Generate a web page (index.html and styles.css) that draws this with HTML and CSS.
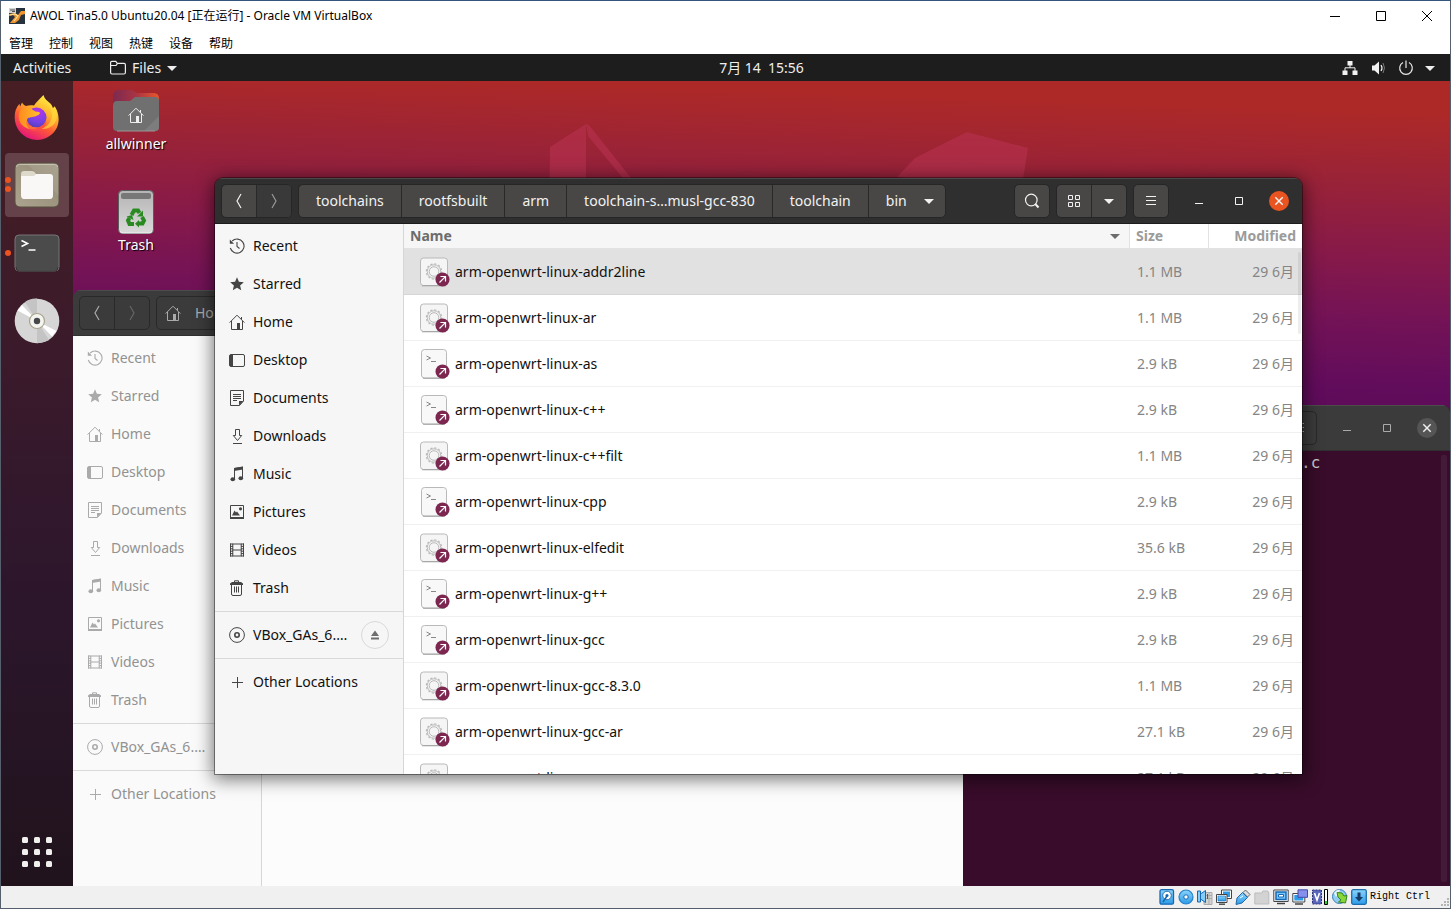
FILE: index.html
```html
<!DOCTYPE html>
<html lang="en">
<head>
<meta charset="utf-8">
<title>AWOL Tina5.0 Ubuntu20.04 - Oracle VM VirtualBox</title>
<link rel="stylesheet" href="styles.css">
</head>
<body>
<svg class="defs" aria-hidden="true">
  <defs>
    <linearGradient id="ff-ring" x1="0.8" y1="0.05" x2="0.3" y2="1"><stop offset="0" stop-color="#fff044"/><stop offset=".35" stop-color="#ffb02c"/><stop offset=".62" stop-color="#ff5a35"/><stop offset="1" stop-color="#e3127f"/></linearGradient>
    <radialGradient id="ff-globe" cx=".6" cy=".2" r=".9"><stop offset="0" stop-color="#b833e8"/><stop offset=".6" stop-color="#7542e5"/><stop offset="1" stop-color="#4b3fae"/></radialGradient>
    <linearGradient id="ff-fox" x1="0" y1="0" x2="1" y2="0"><stop offset="0" stop-color="#ff8a1e"/><stop offset="1" stop-color="#ffc02e"/></linearGradient>
    <linearGradient id="beige" x1="0" y1="1" x2="1" y2="0"><stop offset="0" stop-color="#aca48e"/><stop offset=".62" stop-color="#9a927d"/><stop offset=".63" stop-color="#a39b87"/><stop offset="1" stop-color="#aaa391"/></linearGradient>
    <linearGradient id="folder-back" x1="0" y1="0" x2="1" y2="0"><stop offset="0" stop-color="#7c2a50"/><stop offset=".5" stop-color="#a83444"/><stop offset="1" stop-color="#e9572a"/></linearGradient>
    <linearGradient id="bin" x1="0" y1="0" x2="0" y2="1"><stop offset="0" stop-color="#b4b4b4"/><stop offset="1" stop-color="#dadada"/></linearGradient>
    <linearGradient id="blue" x1="0" y1="0" x2="0" y2="1"><stop offset="0" stop-color="#8ad4fb"/><stop offset="1" stop-color="#2c9be8"/></linearGradient>
  </defs>
  <symbol id="recent" viewBox="0 0 16 16"><path d="M3.200 3A7 7 0 1 1 1.300 10M8 4v4.500l2.500 2" fill="none" stroke="currentColor" stroke-width="1.100"/><path d="M.8 1.500v4.300h4.300z" fill="currentColor"/></symbol>
  <symbol id="star" viewBox="0 0 16 16"><path d="M8 1.300l1.900 4.500 4.900.4-3.700 3.200 1.100 4.800L8 11.700l-4.200 2.500 1.100-4.800L1.200 6.200l4.900-.4z" fill="currentColor"/></symbol>
  <symbol id="home" viewBox="0 0 16 16"><path d="M.6 8.600L8 1.200l7.400 7.400M2.500 7v8.500h11V7M12.500 5.500V3" fill="none" stroke="currentColor"/><path d="M8 9h3v6.500H8z" fill="currentColor"/></symbol>
  <symbol id="desktop" viewBox="0 0 16 16"><rect x=".5" y="2.500" width="15" height="12" rx="1.500" fill="none" stroke="currentColor"/><path d="M1 3h3v11H1z" fill="currentColor"/></symbol>
  <symbol id="documents" viewBox="0 0 16 16"><path d="M1.500.5h13v10.500l-4 4.500h-9zM4 4.500h8M4 6.500h8M4 8.500h8M4 10.500h4" fill="none" stroke="currentColor"/><path d="M10 15.500V11h4.500z" fill="currentColor"/></symbol>
  <symbol id="downloads" viewBox="0 0 16 16"><path d="M6.500 1.500h4v6h2.200l-4.200 5-4.200-5h2.200zM4 15.500h9" fill="none" stroke="currentColor"/></symbol>
  <symbol id="music" viewBox="0 0 16 16"><path d="M5.500 13V2.500l8-1.300V12" fill="none" stroke="currentColor"/><path d="M5 2l9-1.500v3L5 5z" fill="currentColor"/><ellipse cx="3.800" cy="13.200" rx="2.300" ry="2" fill="currentColor"/><ellipse cx="11.800" cy="12.200" rx="2.300" ry="2" fill="currentColor"/></symbol>
  <symbol id="pictures" viewBox="0 0 16 16"><path d="M1.500 1.500h13v12h-13z" fill="none" stroke="currentColor"/><path d="M1 13h14v2H1zM3 11.500l2.500-5 1.500 2 1-1 3 4z" fill="currentColor"/><circle cx="11.500" cy="4.800" r="1.600" fill="currentColor"/></symbol>
  <symbol id="videos" viewBox="0 0 16 16"><path d="M1.500 1.500v13M3.800 2v12M12.200 2v12M14.500 1.500v13M3.500 2h9M3.500 8h9M3.500 14h9" fill="none" stroke="currentColor"/><path d="M1 2h3M1 4.400h3M1 6.800h3M1 9.200h3M1 11.600h3M1 14h3M12 2h3M12 4.400h3M12 6.800h3M12 9.200h3M12 11.600h3M12 14h3" stroke="currentColor"/></symbol>
  <symbol id="trash" viewBox="0 0 16 16"><path d="M2.500 4.500v9.500q0 1.500 1.500 1.500h7q1.500 0 1.500-1.500V4.500M5.500 6.500v6M7.500 6.500v6M9.500 6.500v6M5.500 2V.8h4V2" fill="none" stroke="currentColor"/><path d="M1 3.500L3 2h9l2 1.500V5H1z" fill="currentColor"/></symbol>
  <symbol id="disc" viewBox="0 0 16 16"><g fill="none" stroke="currentColor"><circle cx="8" cy="8" r="7.400"/><circle cx="8" cy="8" r="2.200" stroke-width="1.600"/></g></symbol>
  <symbol id="plus" viewBox="0 0 16 16"><path d="M3 8.500h11M8.500 3v11" stroke="currentColor"/></symbol>
  <symbol id="eject" viewBox="0 0 16 16"><path d="M8 3.500l4 5.500H4zM4 10.500h8v2H4z" fill="currentColor"/></symbol>
  <symbol id="prev" viewBox="0 0 16 16"><path d="M10 1L6 8l4 7" fill="none" stroke="currentColor" stroke-width="1.200"/></symbol>
  <symbol id="next" viewBox="0 0 16 16"><path d="M6 1l4 7-4 7" fill="none" stroke="currentColor" stroke-width="1.200"/></symbol>
  <symbol id="down" viewBox="0 0 16 16"><path d="M3 6h10l-5 5z" fill="currentColor"/></symbol>
  <symbol id="search" viewBox="0 0 16 16"><g fill="none" stroke="currentColor" stroke-width="1.200"><circle cx="7.300" cy="7" r="5.800"/><path d="M11.300 11l3.200 3.500" stroke-width="2"/></g></symbol>
  <symbol id="grid" viewBox="0 0 16 16"><path d="M2.500 2.500h4v4h-4zM9.500 2.500h4v4h-4zM2.500 9.500h4v4h-4zM9.500 9.500h4v4h-4z" fill="none" stroke="currentColor"/></symbol>
  <symbol id="menu" viewBox="0 0 16 16"><path d="M3 3.500h10M3 7.500h10M3 11.500h10" stroke="currentColor"/></symbol>
  <symbol id="min" viewBox="0 0 16 16"><path d="M4 10.500h8" stroke="currentColor"/></symbol>
  <symbol id="max" viewBox="0 0 16 16"><path d="M4.500 4.500h7v7h-7z" fill="none" stroke="currentColor"/></symbol>
  <symbol id="close" viewBox="0 0 16 16"><path d="M4.300 4.300l7.400 7.400M11.700 4.300l-7.400 7.400" stroke="currentColor" stroke-width="1.500"/></symbol>
  <symbol id="link" viewBox="0 0 16 16"><circle cx="8" cy="8" r="7.500" fill="#7c2650"/><path d="M4.800 11.200l6-6M5.800 4.800h5.400v5.400" fill="none" stroke="#fff" stroke-width="1.300"/></symbol>
  <symbol id="exec" viewBox="0 0 32 32"><rect x="1.500" y="2" width="27" height="27.500" rx="3" fill="#f5f5f5" stroke="#b9b9b9"/><path d="M3 29.800h24" stroke="#999" stroke-width=".8"/><g fill="none" stroke="#b8b8b8"><circle cx="15" cy="15.500" r="4.800"/><circle cx="15" cy="15.500" r="6.700" stroke-width=".9"/><circle cx="15" cy="15.500" r="7.600" stroke-width="1.200" stroke-dasharray="2.200 1.780"/></g><use href="#link" x="16" y="16" width="15" height="15"/></symbol>
  <symbol id="script" viewBox="0 0 32 32"><rect x="2.500" y="1.500" width="25" height="28.500" rx="3" fill="#f8f8f8" stroke="#b9b9b9"/><path d="M4 30.300h22" stroke="#999" stroke-width=".8"/><path d="M7.500 8l4 2-4 2M12 13.500h5" fill="none" stroke="#888"/><use href="#link" x="16" y="16" width="15" height="15"/></symbol>
</svg>

<div class="vm">
  <header class="titlebar">
    <svg class="i16" viewBox="0 0 16 16"><path d="M0 0h16v16H0z" fill="#27323f"/><path d="M0 6l6-1 3 2 3-4h4v3l-4 1-2 5-4 3H1l5-6-2-2-4 1z" fill="#f0952d"/><path d="M1 7l5-1 3 2-4 5" fill="none" stroke="#fce3a2" stroke-width="1.200"/><path d="M0 0h7v5H0z" fill="#d4d4d4"/><path d="M1 2h5M3 3.500h3" stroke="#555"/></svg>
    <h1>AWOL Tina5.0 Ubuntu20.04 [正在运行] - Oracle VM VirtualBox</h1>
    <div class="host-controls">
      <button aria-label="Minimize"><svg viewBox="0 0 12 12"><path d="M1 6.500h10" stroke="#000"/></svg></button>
      <button aria-label="Maximize"><svg viewBox="0 0 12 12"><path d="M1.500 1.500h9v9h-9z" fill="none" stroke="#000"/></svg></button>
      <button aria-label="Close"><svg viewBox="0 0 12 12"><path d="M1 1l10 10M11 1L1 11" stroke="#000"/></svg></button>
    </div>
  </header>
  <nav class="menubar"><button>管理</button><button>控制</button><button>视图</button><button>热键</button><button>设备</button><button>帮助</button></nav>

  <div class="topbar">
    <button class="activities">Activities</button>
    <button class="appmenu"><svg class="i16" viewBox="0 0 16 16"><path d="M.6 12.500V2.500Q.6 1.300 1.800 1.300h4l1.400 2h6.800q1.400 0 1.400 1.400v7.800q0 1.500-1.500 1.500H2Q.6 14 .6 12.500zM1 5.500h5l1.500-2" fill="none" stroke="#eee" stroke-width="1.200"/></svg>Files<svg class="i16 arrow"><use href="#down"/></svg></button>
    <button class="clock">7月 14&nbsp; 15:56</button>
    <button class="tray" aria-label="System menu">
      <svg class="i16" viewBox="0 0 16 16"><path d="M5.500 1h5v4.500h-5zM.5 10.500h5V15h-5zM10.500 10.500h5V15h-5z" fill="#f2f2f2"/><path d="M8 5v3M3 11V7.800h10V11" fill="none" stroke="#f2f2f2"/></svg>
      <svg class="i16" viewBox="0 0 16 16"><path d="M2 5.500h2.500L9 1.500v13l-4.500-4H2z" fill="#f2f2f2"/><path d="M11 5q2 3 0 6" fill="none" stroke="#f2f2f2" stroke-width="1.200"/><path d="M13 3q3 5 0 10" fill="none" stroke="#777"/></svg>
      <svg class="i16" viewBox="0 0 16 16"><path d="M5 2.500a6.300 6.300 0 1 0 6 0M8 .5v7.500" fill="none" stroke="#e8e8e8" stroke-width="1.200"/></svg>
      <svg class="i16"><use href="#down"/></svg>
    </button>
  </div>

  <main class="guest">
    <nav class="dock" aria-label="Dock">
      <button aria-label="Firefox"><svg viewBox="0 0 46 46">
        <path d="M8 8.500c1 2 2.500 3 4 3.600 2.500-1 6-1 8-.5C22 8 26 5 29.500 1c1 3.500 3 5.500 6 8 2 1.700 3 4 3.200 5.200l2-2c4.500 7 5.300 15.800 1.500 22.800A22.300 22.300 0 0 1 1 27C0 20 1.500 14 5.500 9.800l.5 3z" fill="url(#ff-ring)"/>
        <path d="M29 3c3 6 8.500 9 9 17 .5 7-5 13-11 15 9 1 16-5 16-14 0-4-1-6-2.500-8l-1.500 2C38 8 32 7 29 3z" fill="#ffdc3e" opacity=".65"/>
        <circle cx="22.500" cy="23.500" r="10" fill="url(#ff-globe)"/>
        <path d="M6.500 16c4-3 9-2.500 11-1l4 2.500c3 .3 4.500.5 4.500 1.500-.5 2-3 2.500-5 3.500-3 1-8 0-8 4 0 5 6 8 11 7-7 4-17 0-19-8-.8-4 0-7 1.500-9.500z" fill="url(#ff-fox)"/>
        <path d="M12 26c1 5 6 8.500 11 7.500 5-1 8-4 9-8 1 7-5 12-12 11.500-5-.5-8-5-8-11z" fill="#ff4f45" opacity=".7"/>
      </svg></button>
      <button class="active two" aria-label="Files"><svg viewBox="0 0 46 46"><rect x="1" y="1" width="44" height="44" rx="5" fill="url(#beige)" stroke="#56513f"/><path d="M2.500 5q0-2.500 3-2.500h35q3 0 3 2.500" fill="none" stroke="#c5c0b0"/><path d="M7 12q0-3 3-3h8q2 0 3 1.500l1 1.500v6H7z" fill="#dedacb"/><path d="M7 14h13l2-2h14q3 0 3 3v18q0 4-3 4H10q-3 0-3-4z" fill="#f9f8f6"/></svg></button>
      <button class="one" aria-label="Terminal"><svg viewBox="0 0 46 46"><rect x="1" y="5" width="44" height="36" rx="4" fill="#4b4b4b" stroke="#777"/><path d="M2 37q0 4 3 4h36q3 0 3-4" fill="none" stroke="#333"/><path d="M7.500 10.500l6 3-6 3M14.500 20h7" fill="none" stroke="#fff" stroke-width="1.600"/></svg></button>
      <button aria-label="Disc"><svg viewBox="0 0 46 46"><circle cx="23" cy="23" r="22.300" fill="#d6d6d6"/><path d="M23 23L11 4q5-4 12-3.500zM23 23l12 19q-5 3-12 3.300z" fill="#c4c4c4"/><path d="M23 23L3.500 12.500 8 7zM23 23l19.500 10L38 38.500z" fill="#fff"/><circle cx="23" cy="23" r="7.500" fill="#f4f4f0" stroke="#aaa48c" stroke-width="1.200"/><circle cx="23" cy="23" r="3.200" fill="#484848"/></svg></button>
      <button class="apps" aria-label="Show Applications"><svg viewBox="0 0 46 46" fill="#f2f0ef"><rect x="8" y="8" width="6" height="6" rx="1.500"/><rect x="20" y="8" width="6" height="6" rx="1.500"/><rect x="32" y="8" width="6" height="6" rx="1.500"/><rect x="8" y="20" width="6" height="6" rx="1.500"/><rect x="20" y="20" width="6" height="6" rx="1.500"/><rect x="32" y="20" width="6" height="6" rx="1.500"/><rect x="8" y="32" width="6" height="6" rx="1.500"/><rect x="20" y="32" width="6" height="6" rx="1.500"/><rect x="32" y="32" width="6" height="6" rx="1.500"/></svg></button>
    </nav>

    <section class="desktop">
      <svg class="wallpaper" aria-hidden="true"><g fill="#b83250" opacity=".6"><path d="M477 66l36-23v75l-37 30z"/><path d="M513 43l3 1 46 58h-8l-39-47z"/><path d="M824 96l18-19 52-26 61 16-8 50z"/></g></svg>
      <div class="shortcuts">
        <a href="#home-folder"><svg viewBox="0 0 48 48"><path d="M1 12q0-8 6-8h13l5 3h17q5 0 5 6v10H1z" fill="url(#folder-back)"/><path d="M1 20q0-5 4-5h13l5-4h20q4 0 4 4v26q0 4-4 4H5q-4 0-4-4z" fill="#707070"/><path d="M47 30v11q0 4-4 4H32z" fill="#7d7d7d"/><path d="M5 45h38" stroke="#999"/><use href="#home" x="16" y="21" width="16" height="16" color="#eee"/></svg>allwinner</a>
        <a href="#trash-folder"><svg viewBox="0 0 48 48"><rect x="6.500" y="3.500" width="35" height="43" rx="4" fill="url(#bin)" stroke="#5c5c5c"/><path d="M8 44q0 2 3 2h26q3 0 3-2" fill="none" stroke="#f2f2f2"/><rect x="9" y="6" width="30" height="6" rx="2" fill="#777"/><g fill="none" stroke="#2a8a22" stroke-width="4"><path d="M19.500 28l2.500-4.500h4l1.500 2.500"/><path d="M30 30l2 3.500-1.500 3h-4"/><path d="M22 37h-4.500L16 33.500l1.500-2.500"/></g><path d="M31 23.500v6h-6zM27 33v7.500l-4-3.700zM14.500 29.500l5.500-1.500 1.500 5z" fill="#2a8a22"/></svg>Trash</a>
      </div>

      <section class="window files back" aria-label="Home">
        <header class="headerbar">
          <div class="group"><button aria-label="Back"><svg class="i16"><use href="#prev"/></svg></button><button class="off" aria-label="Forward"><svg class="i16"><use href="#next"/></svg></button></div>
          <div class="group path"><button class="homecrumb"><svg class="i16"><use href="#home"/></svg>Home</button></div>
        </header>
        <div class="content">
          <nav class="sidebar">
            <ul><li><a href="#recent"><svg class="i16"><use href="#recent"/></svg>Recent</a></li><li><a href="#star"><svg class="i16"><use href="#star"/></svg>Starred</a></li><li><a href="#home"><svg class="i16"><use href="#home"/></svg>Home</a></li><li><a href="#desktop"><svg class="i16"><use href="#desktop"/></svg>Desktop</a></li><li><a href="#documents"><svg class="i16"><use href="#documents"/></svg>Documents</a></li><li><a href="#downloads"><svg class="i16"><use href="#downloads"/></svg>Downloads</a></li><li><a href="#music"><svg class="i16"><use href="#music"/></svg>Music</a></li><li><a href="#pictures"><svg class="i16"><use href="#pictures"/></svg>Pictures</a></li><li><a href="#videos"><svg class="i16"><use href="#videos"/></svg>Videos</a></li><li><a href="#trash"><svg class="i16"><use href="#trash"/></svg>Trash</a></li></ul>
            <ul><li><a href="#disc"><svg class="i16"><use href="#disc"/></svg>VBox_GAs_6.…</a></li></ul>
            <ul><li><a href="#plus"><svg class="i16"><use href="#plus"/></svg>Other Locations</a></li></ul>
          </nav>
          <div class="empty"></div>
        </div>
      </section>

      <section class="window terminal" aria-label="Terminal">
        <header class="headerbar">
          <div class="group end"><button aria-label="Menu"><svg class="i16"><use href="#menu"/></svg></button></div>
          <div class="controls"><button aria-label="Minimize"><svg class="i16"><use href="#min"/></svg></button><button aria-label="Maximize"><svg class="i16"><use href="#max"/></svg></button><button class="close" aria-label="Close"><svg class="i16"><use href="#close"/></svg></button></div>
        </header>
        <pre class="tty">.c</pre>
        <i class="scroll"></i>
      </section>

      <section class="window files front" aria-label="bin">
        <header class="headerbar">
          <div class="group"><button aria-label="Back"><svg class="i16"><use href="#prev"/></svg></button><button class="off" aria-label="Forward"><svg class="i16"><use href="#next"/></svg></button></div>
          <div class="group path"><button>toolchains</button><button>rootfsbuilt</button><button>arm</button><button>toolchain-s…musl-gcc-830</button><button>toolchain</button><button class="current">bin<svg class="i16"><use href="#down"/></svg></button></div>
          <div class="group end"><button aria-label="Search"><svg class="i16"><use href="#search"/></svg></button></div>
          <div class="group"><button aria-label="Icon view"><svg class="i16"><use href="#grid"/></svg></button><button aria-label="View options"><svg class="i16"><use href="#down"/></svg></button></div>
          <div class="group"><button aria-label="Menu"><svg class="i16"><use href="#menu"/></svg></button></div>
          <div class="controls"><button aria-label="Minimize"><svg class="i16"><use href="#min"/></svg></button><button aria-label="Maximize"><svg class="i16"><use href="#max"/></svg></button><button class="close" aria-label="Close"><svg class="i16"><use href="#close"/></svg></button></div>
        </header>
        <div class="content">
          <nav class="sidebar">
            <ul><li><a href="#recent"><svg class="i16"><use href="#recent"/></svg>Recent</a></li><li><a href="#star"><svg class="i16"><use href="#star"/></svg>Starred</a></li><li><a href="#home"><svg class="i16"><use href="#home"/></svg>Home</a></li><li><a href="#desktop"><svg class="i16"><use href="#desktop"/></svg>Desktop</a></li><li><a href="#documents"><svg class="i16"><use href="#documents"/></svg>Documents</a></li><li><a href="#downloads"><svg class="i16"><use href="#downloads"/></svg>Downloads</a></li><li><a href="#music"><svg class="i16"><use href="#music"/></svg>Music</a></li><li><a href="#pictures"><svg class="i16"><use href="#pictures"/></svg>Pictures</a></li><li><a href="#videos"><svg class="i16"><use href="#videos"/></svg>Videos</a></li><li><a href="#trash"><svg class="i16"><use href="#trash"/></svg>Trash</a></li></ul>
            <ul><li><a href="#disc"><svg class="i16"><use href="#disc"/></svg>VBox_GAs_6.…</a><button class="eject" aria-label="Eject"><svg class="i16"><use href="#eject"/></svg></button></li></ul>
            <ul><li><a href="#plus"><svg class="i16"><use href="#plus"/></svg>Other Locations</a></li></ul>
          </nav>
          <div class="listing">
            <table>
              <colgroup><col><col class="c-size"><col class="c-mod"></colgroup>
              <thead><tr><th><button>Name<svg class="i16"><use href="#down"/></svg></button></th><th>Size</th><th>Modified</th></tr></thead>
              <tbody>
                <tr class="selected"><td><span><svg><use href="#exec"/></svg>arm-openwrt-linux-addr2line</span></td><td>1.1 MB</td><td>29 6月</td></tr>
                <tr><td><span><svg><use href="#exec"/></svg>arm-openwrt-linux-ar</span></td><td>1.1 MB</td><td>29 6月</td></tr>
                <tr><td><span><svg><use href="#script"/></svg>arm-openwrt-linux-as</span></td><td>2.9 kB</td><td>29 6月</td></tr>
                <tr><td><span><svg><use href="#script"/></svg>arm-openwrt-linux-c++</span></td><td>2.9 kB</td><td>29 6月</td></tr>
                <tr><td><span><svg><use href="#exec"/></svg>arm-openwrt-linux-c++filt</span></td><td>1.1 MB</td><td>29 6月</td></tr>
                <tr><td><span><svg><use href="#script"/></svg>arm-openwrt-linux-cpp</span></td><td>2.9 kB</td><td>29 6月</td></tr>
                <tr><td><span><svg><use href="#exec"/></svg>arm-openwrt-linux-elfedit</span></td><td>35.6 kB</td><td>29 6月</td></tr>
                <tr><td><span><svg><use href="#script"/></svg>arm-openwrt-linux-g++</span></td><td>2.9 kB</td><td>29 6月</td></tr>
                <tr><td><span><svg><use href="#script"/></svg>arm-openwrt-linux-gcc</span></td><td>2.9 kB</td><td>29 6月</td></tr>
                <tr><td><span><svg><use href="#exec"/></svg>arm-openwrt-linux-gcc-8.3.0</span></td><td>1.1 MB</td><td>29 6月</td></tr>
                <tr><td><span><svg><use href="#exec"/></svg>arm-openwrt-linux-gcc-ar</span></td><td>27.1 kB</td><td>29 6月</td></tr>
                <tr><td><span><svg><use href="#exec"/></svg>arm-openwrt-linux-gcc-nm</span></td><td>27.1 kB</td><td>29 6月</td></tr>
              </tbody>
            </table>
            <i class="scroll"></i>
          </div>
        </div>
      </section>
    </section>
  </main>

  <footer class="statusbar">
    <svg class="i16" viewBox="0 0 16 16"><rect x="1" y=".7" width="13.500" height="14.500" rx="1.500" fill="url(#blue)" stroke="#1668b5" stroke-width="1.300"/><circle cx="8" cy="6.500" r="4.300" fill="#fff" stroke="#2372b9"/><circle cx="8" cy="6.500" r="1.500" fill="#1668b5"/><path d="M4 13l4-6" stroke="#1668b5" stroke-width="1.500"/></svg>
    <svg class="i16" viewBox="0 0 16 16"><circle cx="8" cy="8" r="7" fill="url(#blue)" stroke="#2480cb" stroke-width="1.200"/><circle cx="8" cy="8" r="2.200" fill="#fff" stroke="#1668b5"/></svg>
    <svg class="i16" viewBox="0 0 16 16"><path d="M9 3.500h6v12H7v-3z" fill="#d4d4d4" stroke="#aaa"/><path d="M9 6.500h6M9 9.500h6M12 4v11" stroke="#aaa"/><path d="M.5 2h3v11h-3zM3.500 5l5-3.500v12l-5-3.500z" fill="#83cdf7" stroke="#1668b5"/><path d="M10.500 5v5" stroke="#1668b5"/></svg>
    <svg class="i16" viewBox="0 0 16 16"><path d="M5.500 1h10v8.500h-10z" fill="#fff" stroke="#444"/><path d="M7 2.500h7V8H7z" fill="#2c9be8"/><path d="M.5 5.500h10.500v8H.5z" fill="#fff" stroke="#444"/><path d="M2 7h7.500v5H2z" fill="url(#blue)" stroke="#1668b5" stroke-width=".6"/><path d="M3 15.200h6" stroke="#444" stroke-width="1.400"/></svg>
    <svg class="i16" viewBox="0 0 16 16"><path d="M10.500 1l4.500 4.500-2.500 2.500L8 3.500z" fill="#ddd" stroke="#666"/><path d="M7.500 3.500l5 5-5.500 5.500-6 1.500 1-6.500z" fill="url(#blue)" stroke="#2468a5"/><path d="M5 9l3-2" stroke="#fff"/></svg>
    <svg class="i16" viewBox="0 0 16 16"><path d="M.8 4h7l1-2h5l1 2v11H.8z" fill="#d3d3d3" stroke="#bdbdbd"/></svg>
    <svg class="i16" viewBox="0 0 16 16"><path d="M.8 1h14.400v11.500H.8z" fill="#fff" stroke="#444"/><path d="M3 3h10v7.500H3z" fill="#75c9ff" stroke="#1668b5" stroke-width="1.500"/><path d="M5.500 5.500h5v2.500h-5z" fill="#fff" stroke="#1668b5"/><path d="M4 14.500h8" stroke="#444" stroke-width="1.500"/></svg>
    <svg class="i16" viewBox="0 0 16 16"><path d="M.8 4.500h12v8.500H.8z" fill="#fff" stroke="#444"/><path d="M2.300 6h9v5.500h-9z" fill="#2c9be8"/><path d="M3 15h8" stroke="#444" stroke-width="1.500"/><path d="M6 .8h9.500v7.500H6z" fill="#8490ec" stroke="#4549a9"/></svg>
    <svg class="i16 wide" viewBox="0 0 18 16"><path d="M1.500 1h9v14h-9z" fill="#5a66ba" stroke="#30367e" stroke-dasharray="2 1"/><path d="M3.500 4l2.500 7 2.500-7" fill="none" stroke="#fff" stroke-width="1.600"/><path d="M13.500.5h3v15h-3z" fill="#fff" stroke="#000"/><path d="M14 12h2v3h-2z" fill="#23d32a"/></svg>
    <svg class="i16" viewBox="0 0 16 16"><circle cx="7.500" cy="7.500" r="7" fill="#8fcdf2" stroke="#3a7fb5"/><path d="M2 4q3-4 6-3L6 5 4 8z" fill="#e9f5fb"/><path d="M5 3.500l5 .5 2 3 3-.5-1.500 7.500-7-1 2.500-2-3-3z" fill="#86d83a" stroke="#37851b"/></svg>
    <svg class="i16" viewBox="0 0 16 16"><rect x=".7" y=".7" width="14.600" height="14.600" rx="1.500" fill="url(#blue)" stroke="#1c6dae" stroke-width="1.300"/><path d="M6.500 3.500h3V8H12l-4 4.500L4 8h2.500z" fill="#173a66"/></svg>
    <span>Right Ctrl</span>
    <svg class="grip" viewBox="0 0 10 10" fill="#b5b5b5"><path d="M7 0h2v2H7zM4 3h2v2H4zM7 3h2v2H7zM1 6h2v2H1zM4 6h2v2H4zM7 6h2v2H7z"/></svg>
  </footer>
</div>
</body>
</html>
```
FILE: styles.css
```css
* { box-sizing: border-box; }
body {
  margin: 0;
  font: 14px/20px "Noto Sans", "Noto Sans CJK SC", sans-serif;
  color: #111;
}
button {
  margin: 0;
  padding: 0;
  border: 0;
  background: none;
  color: inherit;
  font: inherit;
  white-space: nowrap;
}
a { color: inherit; text-decoration: none; }
svg { display: block; flex: none; }
.defs { position: absolute; width: 0; height: 0; }
.i16 { width: 16px; height: 16px; }

.vm {
  display: flex;
  flex-direction: column;
  height: 100vh;
  border: 1px solid #56606c;
  border-top-color: #34567c;
  overflow: hidden;
  background: #fff;
}

/* Host window chrome */
.titlebar {
  display: flex;
  align-items: center;
  height: 30px;
  flex: none;
  padding-left: 8px;
  gap: 5px;
}
.titlebar h1 {
  margin: 0;
  font: 12px/16px "Noto Sans", "Noto Sans CJK SC", sans-serif;
  color: #000;
}
.host-controls { display: flex; margin-left: auto; }
.host-controls button { display: grid; place-items: center; width: 46px; height: 30px; }
.host-controls svg { width: 12px; height: 12px; }
.menubar {
  display: flex;
  gap: 16px;
  height: 23px;
  flex: none;
  padding: 0 8px;
  font: 12px/22px "Noto Sans CJK SC", sans-serif;
  color: #000;
}

/* Guest top panel */
.topbar {
  display: grid;
  grid-template-columns: 72px 1fr auto 1fr;
  align-items: center;
  height: 27px;
  flex: none;
  background: #1d1d1d;
  color: #eee;
}
.activities { padding-left: 12px; text-align: left; }
.appmenu { display: flex; align-items: center; gap: 6px; padding-left: 37px; }
.appmenu .arrow { margin-left: -3px; }
.tray { display: flex; align-items: center; justify-content: flex-end; gap: 12px; padding-right: 12px; }
.tray svg:last-child { margin-left: -4px; }

.guest { display: flex; flex: 1; min-height: 0; }
.dock {
  display: flex;
  flex-direction: column;
  gap: 4px;
  width: 72px;
  flex: none;
  padding: 4px 4px 2px;
  background: linear-gradient(#471e23, #3a1a2b 35%, #2c162c 65%, #20131c);
}
.dock button {
  position: relative;
  display: grid;
  place-items: center;
  width: 64px;
  height: 64px;
  border-radius: 4px;
}
.dock svg { width: 46px; height: 46px; }
.dock .active { background: #654249; }
.dock .apps { margin-top: auto; }
.dock .one::before, .dock .two::before, .dock .two::after {
  content: "";
  position: absolute;
  left: 0;
  top: 29px;
  width: 6px;
  height: 6px;
  border-radius: 50%;
  background: #e95420;
}
.dock .two::before { top: 24px; }
.dock .two::after { top: 33px; }

.desktop {
  position: relative;
  flex: 1;
  overflow: hidden;
  background: linear-gradient(182deg, #ad2928 4%, #972239 13%, #86194a 21%, #741356 28%, #620c5c 36%, #4a0a50 52%);
}
.wallpaper { position: absolute; inset: 0; width: 100%; height: 100%; }
.shortcuts {
  position: relative;
  display: flex;
  flex-direction: column;
  gap: 33px;
  width: 126px;
  padding-top: 5px;
}
.shortcuts a {
  display: flex;
  flex-direction: column;
  align-items: center;
  color: #fff;
  text-shadow: 1px 1px 1px #000;
}
.shortcuts svg { width: 48px; height: 48px; }

/* Guest windows */
.window {
  position: absolute;
  display: flex;
  flex-direction: column;
  border-radius: 8px 8px 0 0;
  overflow: hidden;
}
.front {
  inset: 97px 148px 112px 142px;
  box-shadow: 0 0 0 1px rgba(0, 0, 0, .4), 0 3px 18px 2px rgba(0, 0, 0, .55);
}
.back { left: 0; top: 209px; bottom: 0; width: 890px; }
.terminal { left: 890px; top: 324px; right: 0; bottom: 0; background: #380c2a; }
.headerbar {
  display: flex;
  align-items: center;
  gap: 6px;
  height: 46px;
  flex: none;
  padding: 0 7px 1px 6px;
  background: #302f2f;
  border-top: 1px solid #4a4949;
  border-bottom: 1px solid #1c1c1c;
  color: #f2f2f2;
}
.group {
  display: flex;
  height: 34px;
  border: 1px solid #262626;
  border-radius: 5px;
  background: #484745;
  overflow: hidden;
}
.group button { display: grid; place-items: center; width: 34px; }
.group button + button { width: 35px; border-left: 1px solid #292929; }
.group .off { background: #3a3939; color: #999; }
.path button, .path button + button { width: auto; padding: 0 17px; }
.path .current, .path .homecrumb { display: flex; align-items: center; gap: 14px; }
.path button.current { padding-right: 8px; }
.path button.homecrumb { padding: 0 8px; }
.end { margin-left: auto; }
.controls { display: flex; gap: 20px; padding: 0 6px 0 14px; }
.controls button { display: grid; place-items: center; width: 20px; height: 20px; border-radius: 50%; }
.front .close { background: #e95420; }
.terminal .close { background: #555; color: #eee; }
.back .headerbar, .terminal .headerbar { background: #3c3b3b; border-top-color: #4c4c4c; border-bottom-color: #303030; color: #aaa; }
.back .group, .terminal .group { background: #3c3b3b; border-color: #292929; }
.back .group .off { background: none; color: #666; }

.content { display: flex; flex: 1; min-height: 0; background: #fff; }
.sidebar { width: 189px; flex: none; border-right: 1px solid #d6d6d6; background: #f6f6f6; }
.sidebar ul { margin: 0; padding: 4px 0; list-style: none; }
.sidebar ul:first-child { padding-top: 3px; }
.sidebar ul + ul { border-top: 1px solid #d9d9d9; }
.sidebar li { display: flex; align-items: center; height: 38px; }
.sidebar a { display: flex; align-items: center; gap: 8px; padding-left: 14px; white-space: nowrap; }
.sidebar .i16 { color: #444; }
.sidebar .eject { display: grid; place-items: center; width: 28px; height: 28px; margin: 0 14px 0 auto; border: 1px solid #d9d9d9; border-radius: 50%; }
.sidebar .eject .i16 { color: #6e6e6e; }
.back .sidebar { background: #fafafa; color: #929292; }
.back .sidebar .i16 { color: #aaa; }
.back .content { background: #fcfcfc; }

.listing { position: relative; flex: 1; min-width: 0; overflow: hidden; }
table { width: 100%; border-collapse: separate; border-spacing: 0; table-layout: fixed; }
.c-size { width: 79px; }
.c-mod { width: 94px; }
th { height: 25px; padding: 0 6px; border-bottom: 1px solid #e2e2e2; text-align: left; color: #9b9b9b; font-weight: 700; }
th + th { border-left: 1px solid #e2e2e2; }
th:last-child { text-align: right; }
th:first-child { background: #f6f6f6; color: #6c6c6c; }
th button { display: flex; align-items: center; justify-content: space-between; width: 100%; }
td { height: 46px; padding: 0 8px; border-bottom: 1px solid #f0f0f0; color: #858585; white-space: nowrap; }
td:first-child { padding-left: 15px; color: #111; }
td:last-child { text-align: right; }
td span { display: flex; align-items: center; gap: 4px; }
td svg { width: 32px; height: 32px; }
.selected td { background: #e1e1e1; border-bottom-color: #d6d6d6; }
.scroll { position: absolute; top: 28px; right: 1px; width: 3px; height: 82px; border-radius: 2px; background: rgba(0, 0, 0, .07); }
.tty { margin: 0; padding: 2px 0 0 338px; font: 16px/20px "DejaVu Sans Mono", "Liberation Mono", monospace; color: #ccc; }
.terminal .scroll { top: 50px; right: 3px; width: 6px; height: auto; bottom: 4px; background: #431a38; }

/* Host status bar */
.statusbar {
  display: flex;
  align-items: center;
  justify-content: flex-end;
  gap: 3px;
  height: 22px;
  flex: none;
  background: #f0f0f0;
  color: #000;
  font: 10px/16px "Liberation Mono", monospace;
}
.statusbar .wide { width: 18px; }
.statusbar .grip { width: 10px; height: 10px; align-self: flex-end; margin-left: 7px; }
```
